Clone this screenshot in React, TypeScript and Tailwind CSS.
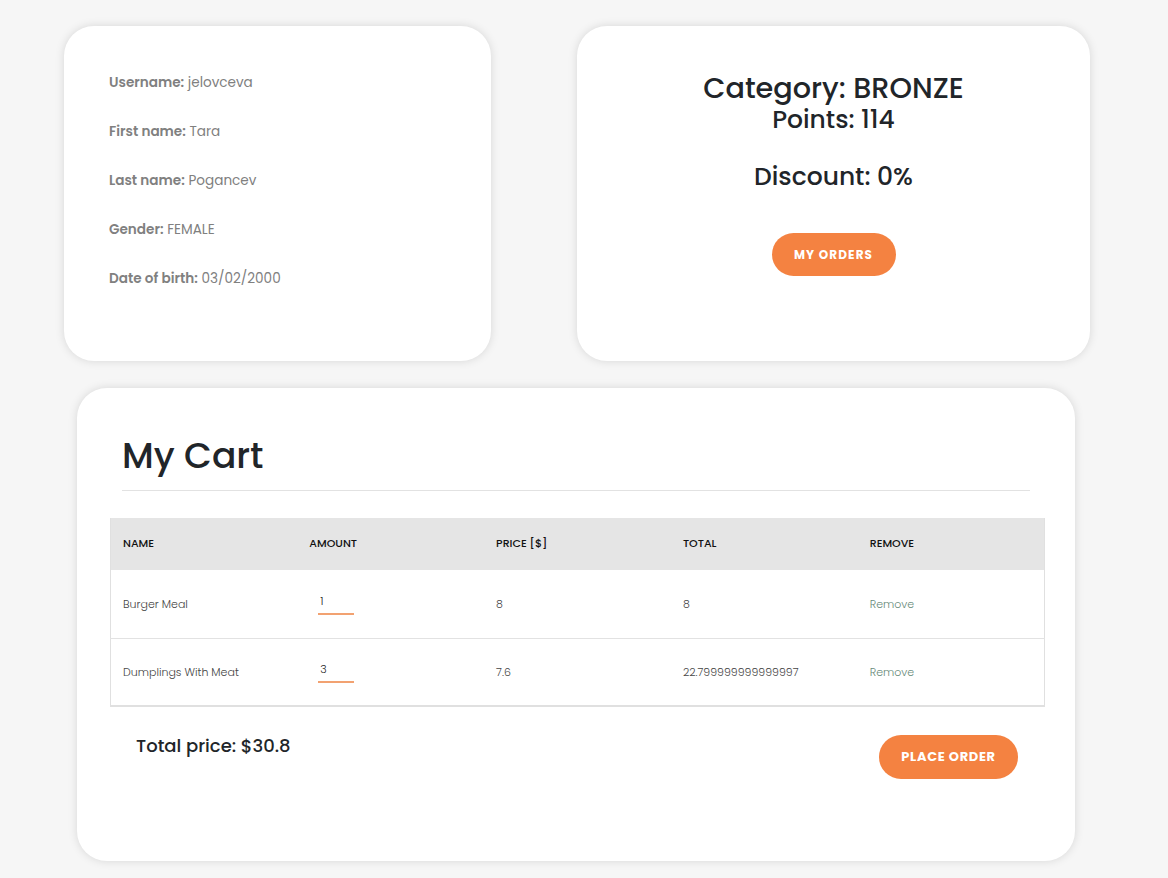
const profile = [
  { label: "Username:", value: "jelovceva" },
  { label: "First name:", value: "Tara" },
  { label: "Last name:", value: "Pogancev" },
  { label: "Gender:", value: "FEMALE" },
  { label: "Date of birth:", value: "03/02/2000" },
];

const cart = [
  { id: 1, name: "Burger Meal", amount: "1", price: "8", total: "8" },
  { id: 2, name: "Dumplings With Meat", amount: "3", price: "7.6", total: "22.799999999999997" },
];

const columns = ["Name", "Amount", "Price [$]", "Total", "Remove"];

export default function App() {
  return (
    <div
      className="min-h-[878px] bg-[#f6f6f6] pt-[26px] pb-4 text-[#212529]"
      style={{ fontFamily: "Poppins, 'Noto Sans', 'Open Sans', sans-serif" }}
    >
      <div className="flex pl-[64px]">
        <div className="h-[335px] w-[427px] rounded-[30px] bg-white px-[45px] pt-[46px] shadow-[0_0_10px_rgba(0,0,0,0.13)]">
          {profile.map((row) => (
            <p key={row.label} className="mb-[28px] text-[13.6px] leading-[21px] text-[#808080]">
              <span className="font-semibold">{row.label}</span> {row.value}
            </p>
          ))}
        </div>

        <div className="ml-[86px] flex h-[335px] w-[513px] flex-col items-center rounded-[30px] bg-white pt-[47px] shadow-[0_0_10px_rgba(0,0,0,0.13)]">
          <h3 className="text-[28.7px] font-medium leading-[30px]">Category: BRONZE</h3>
          <h4 className="mt-[2px] text-[25px] font-medium leading-[30px]">Points: 114</h4>
          <h4 className="mt-[27px] text-[25px] font-medium leading-[30px]">Discount: 0%</h4>
          <button className="mt-[41px] h-[43px] w-[124px] rounded-full bg-[#f48241] text-[12px] font-bold tracking-[0.09em] text-white">
            MY ORDERS
          </button>
        </div>
      </div>

      <div className="ml-[77px] mt-[27px] h-[473px] w-[998px] rounded-[30px] bg-white px-[33px] pt-[40px] shadow-[0_0_10px_rgba(0,0,0,0.13)]">
        <h1 className="px-[12px] text-[36px] font-medium leading-[56px]">My Cart</h1>
        <div className="mx-[12px] mt-[6px] h-px bg-[#e2e2e2]" />

        <table className="mt-[27px] w-[935px] table-fixed border-x border-b-2 border-[#e0e0e0] text-[11px]">
          <thead>
            <tr className="h-[52px] bg-[#e5e5e5]">
              {columns.map((c) => (
                <th key={c} className="px-[12px] pb-[1px] text-left font-medium uppercase text-[#111]">
                  {c}
                </th>
              ))}
            </tr>
          </thead>
          <tbody className="font-light text-[#444]">
            {cart.map((item) => (
              <tr key={item.id} className="h-[68px] border-b border-[#e2e2e2] last:border-b-0">
                <td className="px-[12px]">{item.name}</td>
                <td className="px-[12px]">
                  <div className="ml-[9px] w-[36px] border-b-2 border-[#f2a271] pl-[2px] pb-[3px] text-[#222]">
                    {item.amount}
                  </div>
                </td>
                <td className="px-[12px]">{item.price}</td>
                <td className="px-[12px]">{item.total}</td>
                <td className="px-[12px] text-[#688a79]">Remove</td>
              </tr>
            ))}
          </tbody>
        </table>

        <div className="mt-[27px] flex items-start justify-between pl-[26px] pr-[24px]">
          <p className="text-[18px] font-medium leading-[24px]">Total price: $30.8</p>
          <button className="mt-[1px] h-[44px] w-[139px] rounded-full bg-[#f48241] text-[13px] font-bold tracking-[0.05em] text-white">
            PLACE ORDER
          </button>
        </div>
      </div>
    </div>
  );
}
